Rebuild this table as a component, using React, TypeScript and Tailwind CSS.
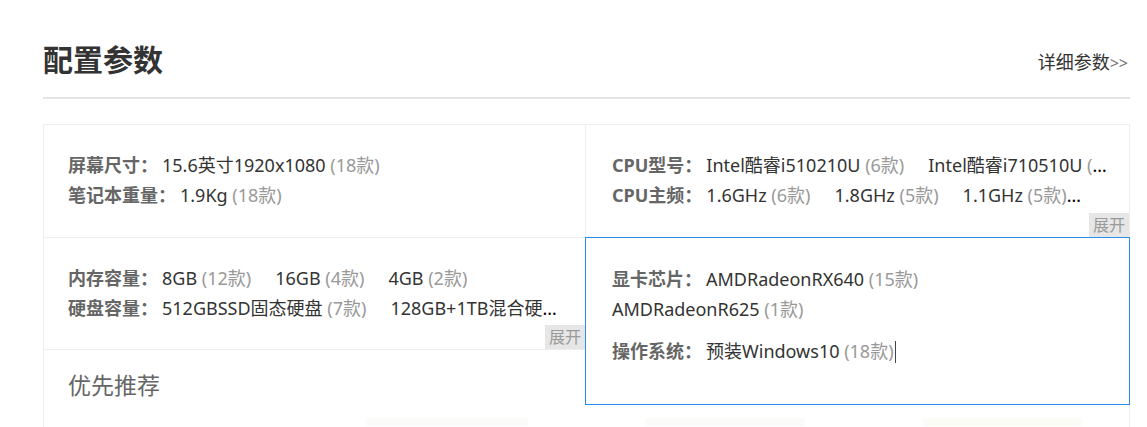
import React from "react";

type Opt = { v: string; c: string };

const Line = ({ label, opts }: { label: string; opts: Opt[] }) => (
  <div className="h-[30px] leading-[30px] whitespace-nowrap overflow-hidden text-ellipsis">
    <span className="font-bold text-[#666] mr-[4px]">{label}</span>
    {opts.map((o, i) => (
      <span key={i} className={i > 0 ? "ml-[24px]" : ""}>
        <span className="text-[#333]">{o.v}</span>{" "}
        <span className="text-[#999]">{o.c}</span>
      </span>
    ))}
  </div>
);

const Expand = () => (
  <div className="absolute right-0 bottom-0 w-[40px] h-[24px] bg-[#e6e6e6] text-[#999] text-[16px] leading-[24px] text-center">
    展开
  </div>
);

export default function App() {
  return (
    <div className="w-[1147px] h-[427px] overflow-hidden bg-white font-[family-name:'Noto_Sans','Noto_Sans_CJK_SC',sans-serif] text-[18px]">
      <div className="ml-[43px] w-[1087px]">
        <div className="pt-[40px] flex items-center justify-between h-[80px]">
          <h1 className="text-[30px] font-bold text-[#333] leading-[40px]">配置参数</h1>
          <a className="text-[18px] text-[#333] leading-[24px] mt-[4px] mr-[2px]">
            详细参数<span className="text-[#777] text-[16px]">&gt;&gt;</span>
          </a>
        </div>
        <div className="mt-[17px] h-[2px] bg-[#e5e5e5]" />
        <div className="mt-[25px] border-l border-t border-[#eee] grid grid-cols-[542px_544px]">
          <div className="h-[113px] border-r border-b border-[#eee] pl-[24px] pr-[22px] pt-[25px] relative">
            <Line label="屏幕尺寸：" opts={[{ v: "15.6英寸1920x1080", c: "(18款)" }]} />
            <Line label="笔记本重量：" opts={[{ v: "1.9Kg", c: "(18款)" }]} />
          </div>
          <div className="h-[113px] border-r border-b border-[#eee] pl-[26px] pr-[18px] pt-[25px] relative">
            <Line
              label="CPU型号："
              opts={[
                { v: "Intel酷睿i510210U", c: "(6款)" },
                { v: "Intel酷睿i710510U", c: "(6款)" },
                { v: "Intel酷睿i310110U", c: "(6款)" },
              ]}
            />
            <Line
              label="CPU主频："
              opts={[
                { v: "1.6GHz", c: "(6款)" },
                { v: "1.8GHz", c: "(5款)" },
                { v: "1.1GHz", c: "(5款)" },
                { v: "2.1GHz", c: "(2款)" },
              ]}
            />
            <Expand />
          </div>
          <div className="h-[112px] border-r border-b border-[#eee] pl-[24px] pr-[22px] pt-[25px] relative">
            <Line
              label="内存容量："
              opts={[
                { v: "8GB", c: "(12款)" },
                { v: "16GB", c: "(4款)" },
                { v: "4GB", c: "(2款)" },
              ]}
            />
            <Line
              label="硬盘容量："
              opts={[
                { v: "512GBSSD固态硬盘", c: "(7款)" },
                { v: "128GB+1TB混合硬盘", c: "(5款)" },
              ]}
            />
            <Expand />
          </div>
          <div className="h-[112px] border-r border-b border-[#eee] relative">
            <div className="absolute -top-px -left-px -right-px h-[168px] z-10 bg-white border border-[#2b8cf0] pl-[26px] pr-[24px] pt-[26px]">
              <div className="leading-[30px]">
                <span className="font-bold text-[#666] mr-[4px]">显卡芯片：</span>
                <span className="text-[#333]">AMDRadeonRX640</span>{" "}
                <span className="text-[#999]">(15款)</span>
                <br />
                <span className="text-[#333]">AMDRadeonR625</span>{" "}
                <span className="text-[#999]">(1款)</span>
              </div>
              <div className="leading-[30px] mt-[12px] whitespace-nowrap">
                <span className="font-bold text-[#666] mr-[4px]">操作系统：</span>
                <span className="text-[#333]">预装Windows10</span>{" "}
                <span className="text-[#999]">(18款)</span>
                <span className="inline-block w-px h-[22px] bg-[#444] align-[-5px] ml-[1px]" />
              </div>
            </div>
          </div>
          <div className="col-span-2 h-[80px] border-r border-[#eee] pl-[24px] pt-[20px]">
            <div className="text-[23px] leading-[30px] text-[#666]">优先推荐</div>
            <div className="mt-[18px] flex gap-[117px] pl-[298px]">
              <div className="w-[162px] h-[8px] bg-[#fbfcfa]" />
              <div className="w-[160px] h-[8px] bg-[#fbfcfa]" />
              <div className="w-[160px] h-[8px] bg-[#fcfcf7]" />
            </div>
          </div>
        </div>
      </div>
    </div>
  );
}
